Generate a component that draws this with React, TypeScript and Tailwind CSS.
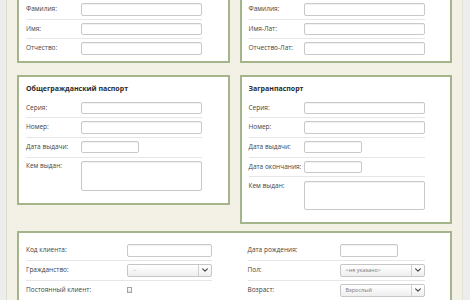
import React from 'react';

const font = { fontFamily: '"Open Sans", "Liberation Sans", sans-serif' };

function TextInput({ w = 'w-[121px]' }: { w?: string }) {
  return (
    <div
      className={`${w} h-[12.5px] shrink-0 rounded-[2px] border border-[#c9c9c9] bg-white shadow-[inset_0_1px_1px_rgba(0,0,0,0.06)]`}
    />
  );
}

function Chevron() {
  return (
    <svg width="8" height="8" viewBox="0 0 10 10" fill="none">
      <path d="M2 3.5 L5 6.5 L8 3.5" stroke="#444" strokeWidth="1.4" strokeLinecap="round" strokeLinejoin="round" />
    </svg>
  );
}

function Select({ value, muted = false }: { value: string; muted?: boolean }) {
  return (
    <div className="flex h-[13.5px] w-[85px] shrink-0 items-center rounded-[2px] border border-[#c6c6c6] bg-gradient-to-b from-white to-[#efefef]">
      <span className={`flex-1 pl-[5px] text-[5.5px] leading-none ${muted ? 'text-[#aaa]' : 'text-[#777]'}`}>
        {value}
      </span>
      <span className="flex h-full w-[13px] items-center justify-center border-l border-[#d0d0d0]">
        <Chevron />
      </span>
    </div>
  );
}

function Row({
  label,
  labelW = 'w-[55px]',
  last = false,
  h = 'h-[19.7px]',
  children,
}: {
  label: string;
  labelW?: string;
  last?: boolean;
  h?: string;
  children: React.ReactNode;
}) {
  return (
    <div className={`flex ${h} items-center ${last ? '' : 'border-b border-[#e6e6e6]'}`}>
      <span className={`${labelW} shrink-0 text-[6.5px] leading-none text-[#444]`}>{label}</span>
      {children}
    </div>
  );
}

function AreaRow({ label }: { label: string }) {
  return (
    <div className="flex items-start pt-[3.5px]">
      <span className="w-[55px] shrink-0 pt-[2px] text-[6.5px] leading-none text-[#444]">{label}</span>
      <div className="h-[29.5px] w-[121px] rounded-[2px] border border-[#c9c9c9] bg-white shadow-[inset_0_1px_1px_rgba(0,0,0,0.06)]" />
    </div>
  );
}

function Panel({ children, className = '' }: { children: React.ReactNode; className?: string }) {
  return <div className={`border-2 border-[#a4b58b] bg-white ${className}`}>{children}</div>;
}

function Title({ children }: { children: React.ReactNode }) {
  return (
    <div className="ml-[7px] mb-[5.5px] pt-[7px] text-[7px] font-bold leading-[9px] text-[#2a2a2a]">{children}</div>
  );
}

export default function App() {
  return (
    <div style={font} className="flex h-[300px] w-[470px] overflow-hidden bg-[#f3f1e5]">
      <div className="w-[7px] shrink-0 border-r border-[#dcdcd0] bg-[#eceeec]" />

      <div className="flex flex-1 flex-col px-[10px]">
        {/* names */}
        <div className="grid grid-cols-2 gap-[10px]">
          <Panel className="border-t-0 pb-[3px]">
            <div className="ml-[7px] w-[176px]">
              <Row label="Фамилия:" h="h-[19.5px]">
                <TextInput />
              </Row>
              <Row label="Имя:" h="h-[19.5px]">
                <TextInput />
              </Row>
              <Row label="Отчество:" h="h-[19px]" last>
                <TextInput />
              </Row>
            </div>
          </Panel>
          <Panel className="border-t-0 pb-[3px]">
            <div className="ml-[7px] w-[176px]">
              <Row label="Фамилия:" h="h-[19.5px]">
                <TextInput />
              </Row>
              <Row label="Имя-Лат:" h="h-[19.5px]">
                <TextInput />
              </Row>
              <Row label="Отчество-Лат:" h="h-[19px]" last>
                <TextInput />
              </Row>
            </div>
          </Panel>
        </div>

        {/* passports */}
        <div className="mt-[12px] grid grid-cols-2 items-start gap-[10px]">
          <Panel className="pb-[12px]">
            <Title>Общегражданский паспорт</Title>
            <div className="ml-[7px] w-[176px]">
              <Row label="Серия:">
                <TextInput />
              </Row>
              <Row label="Номер:">
                <TextInput />
              </Row>
              <Row label="Дата выдачи:">
                <TextInput w="w-[58px]" />
              </Row>
              <AreaRow label="Кем выдан:" />
            </div>
          </Panel>
          <Panel className="pb-[12px]">
            <Title>Загранпаспорт</Title>
            <div className="ml-[7px] w-[176px]">
              <Row label="Серия:">
                <TextInput />
              </Row>
              <Row label="Номер:">
                <TextInput />
              </Row>
              <Row label="Дата выдачи:">
                <TextInput w="w-[58px]" />
              </Row>
              <Row label="Дата окончания:">
                <TextInput w="w-[58px]" />
              </Row>
              <AreaRow label="Кем выдан:" />
            </div>
          </Panel>
        </div>

        {/* client */}
        <Panel className="mt-[6.5px] flex-1 border-b-0 pt-[8px]">
          <div className="flex">
            <div className="ml-[7px] w-[186px]">
              <Row label="Код клиента:" labelW="w-[101px]" h="h-[20px]">
                <TextInput w="w-[85px]" />
              </Row>
              <Row label="Гражданство:" labelW="w-[101px]" h="h-[20px]">
                <Select value="--" muted />
              </Row>
              <Row label="Постоянный клиент:" labelW="w-[101px]" h="h-[19px]" last>
                <span className="h-[6px] w-[5px] border border-[#a3a3a3] bg-gradient-to-b from-white to-[#e4e4e4]" />
              </Row>
            </div>
            <div className="ml-[35.5px] w-[177px]">
              <Row label="Дата рождения:" labelW="w-[92px]" h="h-[20px]">
                <TextInput w="w-[58px]" />
              </Row>
              <Row label="Пол:" labelW="w-[92px]" h="h-[20px]">
                <Select value="<не указано>" />
              </Row>
              <Row label="Возраст:" labelW="w-[92px]" h="h-[19px]" last>
                <Select value="Взрослый" />
              </Row>
            </div>
          </div>
        </Panel>
      </div>

      <div className="w-[8px] shrink-0 border-l border-[#e2e2d8] bg-[#eceeec]" />
    </div>
  );
}
